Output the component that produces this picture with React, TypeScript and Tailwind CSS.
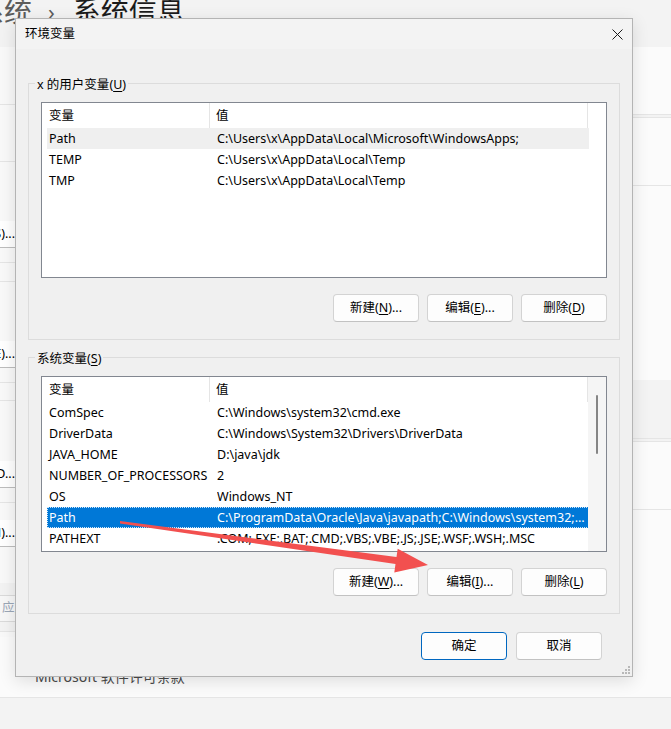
import React from 'react';

type RowState = 'normal' | 'hover' | 'selected';

interface EnvVar {
  name: string;
  value: string;
  state?: RowState;
}

const userVars: EnvVar[] = [
  { name: 'Path', value: 'C:\\Users\\x\\AppData\\Local\\Microsoft\\WindowsApps;', state: 'hover' },
  { name: 'TEMP', value: 'C:\\Users\\x\\AppData\\Local\\Temp' },
  { name: 'TMP', value: 'C:\\Users\\x\\AppData\\Local\\Temp' },
];

const systemVars: EnvVar[] = [
  { name: 'ComSpec', value: 'C:\\Windows\\system32\\cmd.exe' },
  { name: 'DriverData', value: 'C:\\Windows\\System32\\Drivers\\DriverData' },
  { name: 'JAVA_HOME', value: 'D:\\java\\jdk' },
  { name: 'NUMBER_OF_PROCESSORS', value: '2' },
  { name: 'OS', value: 'Windows_NT' },
  {
    name: 'Path',
    value: 'C:\\ProgramData\\Oracle\\Java\\javapath;C:\\Windows\\system32;C:\\Windows;C:\\Windows\\System32\\Wbem',
    state: 'selected',
  },
  { name: 'PATHEXT', value: '.COM;.EXE;.BAT;.CMD;.VBS;.VBE;.JS;.JSE;.WSF;.WSH;.MSC' },
];

// 버튼 라벨: 앞부분 + 밑줄 단축키 + 뒷부분
function WinButton({
  pre,
  hot,
  post,
  primary,
}: {
  pre: string;
  hot?: string;
  post?: string;
  primary?: boolean;
}) {
  return (
    <div
      className={`flex h-[28px] w-[86px] items-center justify-center rounded-[4px] border bg-[#fdfdfd] pt-[1px] text-[12.5px] text-black ${
        primary ? 'border-[#0067c0]' : 'border-[#d3d3d3] border-b-[#c2c2c2]'
      }`}
    >
      {pre}
      {hot && <span className="underline underline-offset-2">{hot}</span>}
      {post}
    </div>
  );
}

function VarRow({ item }: { item: EnvVar }) {
  const state = item.state ?? 'normal';
  const rowColor =
    state === 'selected'
      ? 'bg-[#0078d7] text-white outline outline-1 outline-dotted outline-[#cfe6fa] -outline-offset-1'
      : state === 'hover'
        ? 'bg-[#efefef] text-black'
        : 'text-black';
  return (
    <div className={`ml-[5px] flex h-[21px] w-[542px] ${rowColor}`}>
      <div className="h-[21px] w-[170px] shrink-0 overflow-hidden whitespace-nowrap pl-[2px] pt-[1px] leading-[20px]">
        {item.name}
      </div>
      <div className="h-[21px] min-w-0 flex-1 overflow-hidden text-ellipsis whitespace-nowrap pr-[2px] pt-[1px] leading-[20px]">
        {item.value}
      </div>
    </div>
  );
}

function VarList({ items, scroll }: { items: EnvVar[]; scroll?: boolean }) {
  return (
    <div className="mt-[10px] flex h-[176px] border border-[#828790] bg-white text-[12.5px]">
      <div className="flex min-w-0 flex-1 flex-col">
        <div className="flex h-[25px] shrink-0 items-stretch">
          <div className="flex w-[168px] items-center border-r border-[#e5e5e5] pl-[7px] pt-[2px]">变量</div>
          <div className="flex w-[378px] items-center border-r border-[#e5e5e5] pl-[6px] pt-[2px]">值</div>
        </div>
        {items.map((item) => (
          <VarRow key={item.name + item.value} item={item} />
        ))}
      </div>
      {scroll && (
        <div className="flex w-[18px] shrink-0 justify-center bg-[#f5f5f5]">
          <div className="mt-[18px] h-[59px] w-[2px] rounded-full bg-[#858585]" />
        </div>
      )}
    </div>
  );
}

function GroupBox({
  label,
  hot,
  children,
  className,
}: {
  label: string;
  hot: string;
  children: React.ReactNode;
  className?: string;
}) {
  return (
    <div className={`flex flex-col border border-[#dcdcdc] px-[12px] pb-[17px] ${className ?? ''}`}>
      <div className="-mt-[8px] ml-[-6px] self-start bg-[#f0f0f0] px-[2px] pt-[1px] text-[12.5px] leading-[15px] text-black">
        {label}(<span className="underline underline-offset-2">{hot}</span>)
      </div>
      {children}
    </div>
  );
}

// 뒤쪽 설정 창 왼쪽 가장자리에 보이는 버튼 조각
function EdgeButton({ text }: { text: string }) {
  return (
    <div className="flex h-[27px] items-center justify-end overflow-hidden whitespace-nowrap border-b border-[#bdbdbd] bg-white text-[12.5px] text-black">
      {text}
    </div>
  );
}

export default function App() {
  return (
    <div className="relative h-[729px] w-[671px] overflow-hidden bg-[#f3f3f3] font-['Noto_Sans','Noto_Sans_CJK_SC',sans-serif]">
      {/* 설정 창 배경 */}
      <div className="flex h-full flex-col">
        <div className="h-[47px] shrink-0">
          <div className="-mt-[7px] ml-[-24px] flex items-center text-[28px] font-normal leading-[36px]">
            <span className="text-[#5c5c5c]">系统</span>
            <span className="ml-[16px] text-[22px] text-[#5c5c5c]">›</span>
            <span className="ml-[18px] text-[#1b1b1b]">系统信息</span>
          </div>
        </div>

        <div className="flex h-[590px] shrink-0">
          <div className="flex w-[15px] flex-col bg-[#f9f9f9]">
            <div className="h-[58px] border-b border-[#e5e5e5]" />
            <div className="h-[57px] border-b border-[#e5e5e5]" />
            <div className="h-[59px]" />
            <EdgeButton text="设置(S)..." />
            <div className="h-[15px] border-b border-[#e5e5e5]" />
            <div className="h-[19px] border-b border-[#e5e5e5]" />
            <div className="h-[59px]" />
            <EdgeButton text="设置(E)..." />
            <div className="h-[15px] border-b border-[#e5e5e5]" />
            <div className="h-[18px] border-b border-[#e5e5e5]" />
            <div className="h-[60px]" />
            <EdgeButton text="设置(D..." />
            <div className="h-[15px] border-b border-[#e5e5e5]" />
            <div className="h-[17px]" />
            <EdgeButton text="变量(N)..." />
            <div className="h-[36px]" />
            <div className="h-[12px] bg-[#f3f3f3]" />
            <div className="flex h-[27px] items-center justify-start overflow-hidden whitespace-nowrap border-y border-[#dadada] bg-[#f7f7f7] pl-[2px] text-[12.5px] text-[#9aa6b6]">
              应用(A)
            </div>
            <div className="h-[10px] border-b border-[#e5e5e5] bg-[#f3f3f3]" />
          </div>

          <div className="flex-1" />

          <div className="flex w-[39px] flex-col">
            <div className="h-[68px] border-b border-[#e5e5e5] bg-[#fbfbfb]" />
            <div className="h-[3px] border-b border-[#e5e5e5]" />
            <div className="h-[68px] border-b border-[#e5e5e5] bg-[#fbfbfb]" />
            <div className="h-[194px] bg-[#fbfbfb]" />
            <div className="h-[59px] border-b border-[#e5e5e5]" />
            <div className="h-[3px] border-b border-[#e5e5e5]" />
            <div className="h-[68px] border-b border-[#e5e5e5] bg-[#fbfbfb]" />
            <div className="flex-1 bg-[#fbfbfb]" />
          </div>
        </div>

        <div className="h-[61px] shrink-0 border-b border-[#e5e5e5] bg-[#fbfbfb] pl-[35px] pt-[30px] text-[14px] leading-[20px] text-[#4a4a4a]">
          Microsoft 软件许可条款
        </div>
      </div>

      {/* 환경 변수 대화상자 */}
      <div className="absolute left-[15px] top-[18px] flex h-[659px] w-[618px] flex-col border border-[#b4b4b4] bg-[#f0f0f0] text-black shadow-[0_4px_16px_rgba(0,0,0,0.12)]">
        <div className="flex h-[30px] shrink-0 items-center justify-between bg-[#f3f3f3] pl-[9px] pr-[9px] text-[12.5px]">
          <span>环境变量</span>
          <svg width="11" height="11" viewBox="0 0 11 11">
            <path d="M0.5 0.5 L10.5 10.5 M10.5 0.5 L0.5 10.5" stroke="#1a1a1a" strokeWidth="1" />
          </svg>
        </div>

        <div className="flex flex-1 flex-col px-[12px] pt-[34px]">
          <GroupBox label="x 的用户变量" hot="U">
            <VarList items={userVars} />
            <div className="mt-[16px] flex justify-end gap-[8px]">
              <WinButton pre="新建(" hot="N" post=")..." />
              <WinButton pre="编辑(" hot="E" post=")..." />
              <WinButton pre="删除(" hot="D" post=")" />
            </div>
          </GroupBox>

          <GroupBox label="系统变量" hot="S" className="mt-[17px]">
            <VarList items={systemVars} scroll />
            <div className="mt-[16px] flex justify-end gap-[8px]">
              <WinButton pre="新建(" hot="W" post=")..." />
              <WinButton pre="编辑(" hot="I" post=")..." />
              <WinButton pre="删除(" hot="L" post=")" />
            </div>
          </GroupBox>

          <div className="mt-[18px] flex justify-end gap-[9px] pr-[18px]">
            <WinButton pre="确定" primary />
            <WinButton pre="取消" />
          </div>
        </div>

        <svg className="absolute bottom-[2px] right-[2px]" width="9" height="9" viewBox="0 0 9 9">
          <rect x="7" y="1" width="2" height="2" fill="#b8b8b8" />
          <rect x="4" y="4" width="2" height="2" fill="#b8b8b8" />
          <rect x="7" y="4" width="2" height="2" fill="#b8b8b8" />
          <rect x="1" y="7" width="2" height="2" fill="#b8b8b8" />
          <rect x="4" y="7" width="2" height="2" fill="#b8b8b8" />
          <rect x="7" y="7" width="2" height="2" fill="#b8b8b8" />
        </svg>
      </div>

      {/* 빨간 화살표 주석 */}
      <svg className="pointer-events-none absolute left-0 top-0" width="671" height="729" viewBox="0 0 671 729">
        <polygon
          points="120,521 396.5,557 397.7,548.7 428,565 394.3,572.5 395.5,564 120,523.5"
          fill="#f2504f"
        />
      </svg>
    </div>
  );
}
